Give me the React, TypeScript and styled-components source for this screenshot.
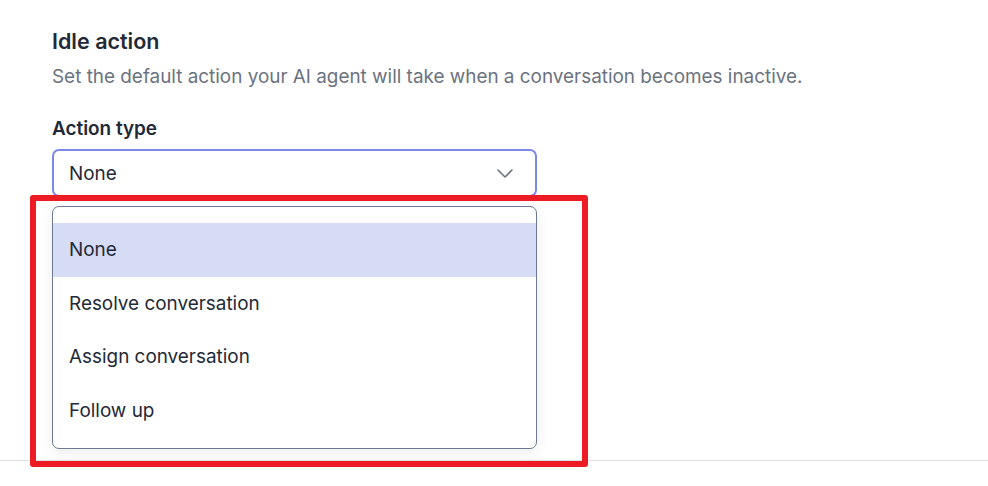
import React from "react";
import styled, { createGlobalStyle } from "styled-components";

const Global = createGlobalStyle`
  html, body { margin: 0; padding: 0; background: #ffffff; }
  body { font-family: Inter, "Noto Sans", sans-serif; -webkit-font-smoothing: antialiased; }
  * { box-sizing: border-box; }
`;

const Page = styled.div`
  position: relative;
  width: 988px;
  height: 486px;
  overflow: hidden;
  display: flex;
  flex-direction: column;
`;

const Section = styled.section`
  padding: 27px 0 0 52px;
  width: 537px;
  display: flex;
  flex-direction: column;
`;

const Title = styled.h2`
  margin: 0;
  font-size: 21.5px;
  line-height: 28px;
  font-weight: 600;
  color: #1f2937;
`;

const Description = styled.p`
  margin: 9px 0 0;
  font-size: 18.9px;
  line-height: 26px;
  color: #6b7280;
  white-space: nowrap;
`;

const Label = styled.label`
  margin-top: 27px;
  font-size: 18.9px;
  line-height: 24px;
  font-weight: 600;
  color: #1f2937;
`;

const SelectBox = styled.div`
  margin-top: 8px;
  height: 48px;
  border: 2px solid #7b88e6;
  border-radius: 7px;
  display: flex;
  align-items: center;
  justify-content: space-between;
  padding: 0 22px 0 15px;
  font-size: 18.9px;
  color: #1f2937;
`;

const Chevron = styled.svg`
  width: 16px;
  height: 9px;
  color: #6b7280;
`;

const Menu = styled.ul`
  list-style: none;
  margin: 9px 0 0;
  padding: 16px 0 11px;
  border: 1px solid #6b7a90;
  border-radius: 7px;
  background: #ffffff;
  box-shadow: 0 4px 14px rgba(0, 0, 0, 0.08);
  overflow: hidden;
`;

const Option = styled.li<{ $active?: boolean }>`
  height: 53.5px;
  display: flex;
  align-items: center;
  padding-left: 16px;
  font-size: 18.9px;
  color: #1f2937;
  background: ${(p) => (p.$active ? "#d6dbf6" : "transparent")};
`;

const Divider = styled.hr`
  position: absolute;
  left: 0;
  right: 0;
  top: 460px;
  margin: 0;
  border: 0;
  border-top: 1px solid #e0e0e0;
`;

const Highlight = styled.div`
  position: absolute;
  left: 30px;
  top: 195px;
  width: 558px;
  height: 272px;
  border: 6px solid #ed1c24;
  border-radius: 3px;
  pointer-events: none;
`;

const options = ["None", "Resolve conversation", "Assign conversation", "Follow up"];

export default function App() {
  return (
    <Page>
      <Global />
      <Divider />
      <Section>
        <Title>Idle action</Title>
        <Description>
          Set the default action your AI agent will take when a conversation becomes inactive.
        </Description>
        <Label>Action type</Label>
        <SelectBox>
          <span>None</span>
          <Chevron viewBox="0 0 16 9" fill="none" stroke="currentColor" strokeWidth="1.6" strokeLinecap="round" strokeLinejoin="round">
            <path d="M1 1l7 7 7-7" />
          </Chevron>
        </SelectBox>
        <Menu>
          {options.map((o, i) => (
            <Option key={o} $active={i === 0}>
              {o}
            </Option>
          ))}
        </Menu>
      </Section>
      <Highlight />
    </Page>
  );
}
